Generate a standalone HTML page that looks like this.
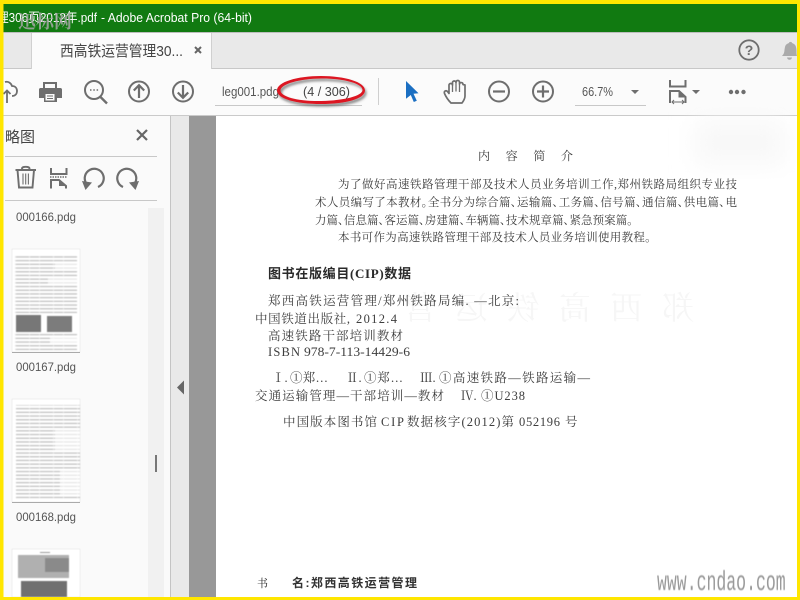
<!DOCTYPE html>
<html lang="zh"><head><meta charset="utf-8"><title>Acrobat</title>
<style>
html,body{margin:0;padding:0;width:800px;height:600px;overflow:hidden;background:#fff}
svg{display:block}
.ui{font-family:"Liberation Sans","Noto Sans CJK SC",sans-serif;fill:#555}
.doc text{font-family:"Liberation Serif","Noto Serif CJK SC",serif;font-size:11.5px;fill:#3d3d3d;font-feature-settings:"palt"}
.doc .c{font-size:12.5px}
.ic{fill:none;stroke:#6e6e6e;stroke-width:2}
</style></head><body>
<svg width="800" height="600" viewBox="0 0 800 600" xmlns="http://www.w3.org/2000/svg">
<defs>
<filter id="b" x="-5%" y="-20%" width="110%" height="140%"><feGaussianBlur stdDeviation="0.3"/></filter>
<filter id="b2" x="-20%" y="-20%" width="140%" height="140%"><feGaussianBlur stdDeviation="0.35"/></filter>
<filter id="b3" x="-30%" y="-30%" width="160%" height="160%"><feGaussianBlur stdDeviation="12"/></filter>
<filter id="bt" x="-5%" y="-5%" width="110%" height="110%"><feGaussianBlur stdDeviation="0.4"/></filter>
<filter id="sh" x="-10%" y="-30%" width="120%" height="170%"><feDropShadow dx="1.500" dy="2.500" stdDeviation="1.300" flood-color="#444" flood-opacity=".65"/></filter>
<pattern id="tl" width="24" height="3.7" patternUnits="userSpaceOnUse"><rect y="1.200" width="24" height=".9" fill="#a8a8a8"/><rect x="5" y="1.200" width="1" height=".9" fill="#e2e2e2"/><rect x="15" y="1.200" width="1" height=".9" fill="#e2e2e2"/></pattern>
</defs>

<!-- base -->
<rect width="800" height="600" fill="#fff"/>
<rect x="0" y="4" width="800" height="28" fill="#117a11"/>
<rect y="32" width="800" height="1" fill="#bdbdbd"/>
<rect y="33" width="800" height="35" fill="#e9e9e9"/>
<rect y="68" width="800" height="1" fill="#c8c8c8"/>
<rect y="69" width="800" height="46" fill="#fbfbfb"/>
<rect y="115" width="800" height="1" fill="#cacaca"/>
<rect x="0" y="116" width="170" height="484" fill="#fafafa"/>
<rect x="170" y="116" width="1" height="484" fill="#c4c4c4"/>
<rect x="171" y="116" width="18" height="484" fill="#e9e9e9"/>
<rect x="189" y="116" width="27" height="484" fill="#989898"/>
<rect x="216" y="116" width="584" height="484" fill="#fff"/>

<!-- title -->
<text x="-3" y="22" class="ui" style="font-size:13px;fill:#fff" textLength="100" lengthAdjust="spacingAndGlyphs">理306页2012年.pdf</text>
<text x="101" y="22" class="ui" style="font-size:13px;fill:#fff" textLength="151" lengthAdjust="spacingAndGlyphs">- Adobe Acrobat Pro (64-bit)</text>
<text x="18" y="28" style="font-family:'Noto Serif CJK SC',serif;font-size:18px;font-weight:bold;fill:#a8a8a8;opacity:.85" textLength="54">迅标网</text>

<!-- tab -->
<rect x="32" y="33" width="179" height="36" fill="#fbfbfb"/>
<path d="M31.500 33V69M211.500 33V69" stroke="#d0d0d0" fill="none"/>
<text x="60" y="56" class="ui" style="font-size:15px;fill:#444" textLength="123" lengthAdjust="spacingAndGlyphs">西高铁运营管理30...</text>
<path d="M195 47l6 6M201 47l-6 6" stroke="#666" stroke-width="2" fill="none"/>

<!-- help, bell -->
<circle cx="749" cy="50" r="9.700" fill="none" stroke="#6e6e6e" stroke-width="1.800"/>
<text x="749" y="55" text-anchor="middle" class="ui" style="font-size:14px;font-weight:bold;fill:#6e6e6e">?</text>
<path d="M782 56c3-3 2-5 3-9 .5-2.500 2.500-3.500 4-4 0-1.500 3-1.500 3 0 1.500.5 3.500 1.500 4 4 1 4 0 6 1 9zM787 57.500c.5 3 4.500 3 5 0z" fill="#aaa"/>

<!-- toolbar left -->
<g class="ic">
<path d="M5 82c3-1 6 1 7 4 3 0 5 2 5 5s-2 5-5 5" stroke-width="1.800"/>
<path d="M7 103V91M3.500 94L7 90.500 10.500 94" stroke-width="1.800"/>
<circle cx="94" cy="90" r="9"/>
<path d="M100.500 97l6.500 6.500" stroke-width="2.400"/>
<circle cx="139" cy="91.500" r="10"/>
<path d="M139 98V85M133.800 90.500l5.200-5.300 5.200 5.300" stroke-width="2.200"/>
<circle cx="183" cy="91.500" r="10"/>
<path d="M183 85v13M177.800 92.500l5.200 5.300 5.200-5.300" stroke-width="2.200"/>
</g>
<path d="M43 82h14v6h3.500c.8 0 1.500.7 1.500 1.500V98h-5v4H44v-4h-5v-8.500c0-.8.7-1.500 1.500-1.500H43z" fill="#6e6e6e"/>
<rect x="45" y="84" width="10" height="4" fill="#fbfbfb"/>
<rect x="45.500" y="94" width="9" height="6.500" fill="#fbfbfb"/>
<path d="M47 96h6M47 98.500h6" stroke="#6e6e6e" fill="none"/>
<path d="M90 90h1.500M93.300 90h1.500M96.600 90h1.500" stroke="#6e6e6e" stroke-width="1.500" fill="none"/>

<!-- page field -->
<text x="222" y="96" class="ui" style="font-size:13px" textLength="57" lengthAdjust="spacingAndGlyphs">leg001.pdg</text>
<rect x="215" y="105" width="147" height="1" fill="#c8c8c8"/>
<rect x="378" y="78" width="1" height="27" fill="#cfcfcf"/>
<path d="M277 90.500C277 82 297 76 321 76s44 6 44 14.500S345 104 321 104 277 99 277 90.500zM280.500 90.500C280.500 97 299 101.500 321.500 101 344 100.500 362.500 96 362.500 90 362.500 83.500 344 78.500 322 78.500S280.500 84 280.500 90.500z" fill="#dc1420" fill-rule="evenodd" filter="url(#sh)"/>
<text x="303" y="96" class="ui" style="font-size:13px;fill:#444" textLength="47" lengthAdjust="spacingAndGlyphs">(4 / 306)</text>

<!-- toolbar right -->
<path d="M406 81l12.500 12.300-5 .4 3.300 7-3 1.300-3-7-4.800 3.800z" fill="#1b6fc2"/>
<path d="M451 103C448 100 446 97 444.500 93.500 443.700 91 446 90 447.500 91.500L449 93.500V85C449 83 452.500 83 452.500 85V82.500C452.500 80.500 456 80.500 456 82.500V82C456 80 459.500 80 459.500 82V84C459.500 82 463 82 463 84.500L465 85V96C465 99 463.500 101 462 103Z" fill="none" stroke="#6e6e6e" stroke-width="1.700" stroke-linejoin="round"/>
<path d="M452.500 85v7M456 82.500v9M459.500 84v8" stroke="#6e6e6e" stroke-width="1.300" fill="none"/>
<g class="ic">
<circle cx="499" cy="91.500" r="10"/><path d="M493 91.500h12" stroke-width="2.200"/>
<circle cx="543" cy="91.500" r="10"/><path d="M537 91.500h12M543 85.500v12" stroke-width="2.200"/>
</g>
<text x="582" y="96" class="ui" style="font-size:13px" textLength="31" lengthAdjust="spacingAndGlyphs">66.7%</text>
<path d="M631 90h8l-4 4z" fill="#6e6e6e"/>
<rect x="575" y="105" width="71" height="1" fill="#c8c8c8"/>
<path d="M670 80v6.500h15.500V80" fill="none" stroke="#6e6e6e" stroke-width="2"/>
<path d="M670 103V91h9l6.500 6v6" fill="none" stroke="#6e6e6e" stroke-width="2"/>
<path d="M679 91v6h6.500" fill="#6e6e6e" stroke="#6e6e6e"/>
<path d="M672 102h12M674 100l-2 2 2 2M682 100l2 2-2 2" fill="none" stroke="#6e6e6e" stroke-width="1"/>
<path d="M692 90h8l-4 4z" fill="#6e6e6e"/>
<circle cx="731" cy="92" r="2.200" fill="#6e6e6e"/><circle cx="737" cy="92" r="2.200" fill="#6e6e6e"/><circle cx="743.500" cy="92" r="2.200" fill="#6e6e6e"/>

<!-- sidebar -->
<text x="5" y="142" class="ui" style="font-size:15px;fill:#444" textLength="30">略图</text>
<path d="M137 130l10 10M147 130l-10 10" stroke="#666" stroke-width="2.200" fill="none"/>
<rect x="5" y="156" width="152" height="1" fill="#c8c8c8"/>
<rect x="5" y="200" width="152" height="1" fill="#c8c8c8"/>
<g fill="none" stroke="#6e6e6e">
<path d="M15.500 170h20.500M22 170v-1.500c0-2.200 7.500-2.200 7.500 0V170M17.500 170l1.500 17.500h13.500l1.500-17.500" stroke-width="1.900"/>
<path d="M23 173.500v11M25.700 173.500v11M28.400 173.500v11" stroke-width="1.100"/>
<path d="M51 168v6h15.500v-6" stroke-width="2"/>
<path d="M50 177h17" stroke-width="1.600" stroke-dasharray="1.500 1"/>
<path d="M51 188.500V180h8l7 6v2.500" stroke-width="2"/>
<path d="M86 183A9.500 9.500 0 1 1 98 187" stroke-width="2.200"/>
<path d="M135 183A9.500 9.500 0 1 0 123 187" stroke-width="2.200"/>
</g>
<path d="M59 180l7 6h-7z" fill="#6e6e6e"/>
<path d="M82 181l10 1.500-6.500 7.500z" fill="#6e6e6e"/><path d="M139 181l-10 1.500 6.500 7.500z" fill="#6e6e6e"/>
<text x="16" y="221" class="ui" style="font-size:12px" textLength="60" lengthAdjust="spacingAndGlyphs">000166.pdg</text>
<text x="16" y="371" class="ui" style="font-size:12px" textLength="60" lengthAdjust="spacingAndGlyphs">000167.pdg</text>
<text x="16" y="521" class="ui" style="font-size:12px" textLength="60" lengthAdjust="spacingAndGlyphs">000168.pdg</text>

<!-- scrollbar -->
<rect x="148" y="208" width="16" height="389" fill="#f1f1f1"/>
<rect x="155" y="455" width="2" height="17" fill="#777"/>
<path d="M184 381.500v14l-7-7z" fill="#666" transform="translate(0 -1)"/>

<!-- thumbnails -->
<g>
<rect x="12" y="249" width="68" height="103" fill="#fff" stroke="#e0e0e0" stroke-width=".5"/>
<path d="M12 352.500h68" stroke="#aaa"/>
<g filter="url(#bt)">
<rect x="15" y="255" width="62" height="58" fill="url(#tl)"/>
<rect x="55" y="262" width="22" height="8" fill="#fff" opacity=".6"/>
<rect x="48" y="278" width="29" height="7" fill="#fff" opacity=".6"/>
<rect x="16" y="315" width="25" height="17" fill="#777"/>
<rect x="47" y="316" width="25" height="16" fill="#7c7c7c"/>
<rect x="15" y="333" width="62" height="17" fill="url(#tl)"/>
<rect x="50" y="336" width="27" height="7" fill="#fff" opacity=".7"/>
</g>

<rect x="12" y="399" width="68" height="103" fill="#fff" stroke="#e0e0e0" stroke-width=".5"/>
<path d="M12 502.500h68" stroke="#aaa"/>
<g filter="url(#bt)">
<rect x="16" y="405" width="64" height="94" fill="url(#tl)"/>
<rect x="55" y="430" width="25" height="22" fill="#fff" opacity=".6"/>
<rect x="60" y="470" width="20" height="26" fill="#fff" opacity=".6"/>
</g>

<rect x="12" y="549" width="68" height="48" fill="#fff" stroke="#e0e0e0" stroke-width=".5"/>
<g filter="url(#bt)">
<rect x="18" y="555" width="51" height="23" fill="#b0b0b0"/>
<rect x="45" y="558" width="24" height="14" fill="#8a8a8a"/>
<rect x="21" y="581" width="46" height="16" fill="#6f6f6f"/>
<rect x="40" y="552" width="10" height="1" fill="#999"/>
</g>
</g>

<!-- faint scan artefacts -->
<rect x="695" y="120" width="90" height="45" fill="#f8f8f8" filter="url(#b3)"/>
<text transform="translate(694 319) scale(-1 1)" style="font-family:'Noto Serif CJK SC',serif;fill:#f6f6f6;font-size:32px" textLength="290">郑西高铁运营</text>

<!-- document text -->
<g class="doc" filter="url(#b)">
<text x="478" y="160" textLength="95" style="font-size:12px">内 容 简 介</text>
<text x="338" y="188" textLength="399">为了做好高速铁路管理干部及技术人员业务培训工作,郑州铁路局组织专业技</text>
<text x="315" y="206" textLength="422">术人员编写了本教材。全书分为综合篇、运输篇、工务篇、信号篇、通信篇、供电篇、电</text>
<text x="315" y="224" textLength="318">力篇、信息篇、客运篇、房建篇、车辆篇、技术规章篇、紧急预案篇。</text>
<text x="338" y="241" textLength="313">本书可作为高速铁路管理干部及技术人员业务培训使用教程。</text>
<text x="268" y="278" textLength="143" style="font-size:13px;font-weight:bold;font-family:'Liberation Serif','Noto Sans CJK SC',sans-serif;fill:#2a2a2a">图书在版编目(CIP)数据</text>
<text class="c" x="268" y="305" textLength="251">郑西高铁运营管理/郑州铁路局编. —北京:</text>
<text class="c" x="255" y="323" textLength="95">中国铁道出版社,</text>
<text class="c" x="356" y="323" textLength="41">2012.4</text>
<text class="c" x="268" y="340" textLength="135">高速铁路干部培训教材</text>
<text class="c" x="268" y="356" textLength="32">ISBN</text>
<text class="c" x="304" y="356" textLength="106" lengthAdjust="spacingAndGlyphs">978-7-113-14429-6</text>
<text class="c" x="272" y="382">Ⅰ.</text><text class="c" x="290" y="382" textLength="38">①郑…</text>
<text class="c" x="346" y="382">Ⅱ.</text><text class="c" x="364" y="382" textLength="39">①郑…</text>
<text class="c" x="420" y="382">Ⅲ.</text><text class="c" x="439" y="382" textLength="151">①高速铁路—铁路运输—</text>
<text class="c" x="255" y="400" textLength="189">交通运输管理—干部培训—教材</text>
<text class="c" x="461" y="400">Ⅳ.</text><text class="c" x="481" y="400" textLength="44">①U238</text>
<text class="c" x="283" y="426" textLength="94">中国版本图书馆</text>
<text class="c" x="381" y="426" textLength="23">CIP</text>
<text class="c" x="407" y="426" textLength="107">数据核字(2012)第</text>
<text class="c" x="519" y="426" textLength="41">052196</text>
<text class="c" x="565" y="426">号</text>
<text x="257" y="587" style="font-size:11px;fill:#333">书</text>
<text x="292" y="587" textLength="125" style="font-size:12px;font-weight:bold;font-family:'Liberation Sans','Noto Sans CJK SC',sans-serif;fill:#333">名:郑西高铁运营管理</text>
</g>
<text transform="translate(657 590) scale(1 1.700)" filter="url(#b2)" style="font-family:'Liberation Mono',monospace;font-size:16.500px;fill:#999">www.cndao.com</text>

<!-- yellow frame -->
<path d="M0 0H800V600H0zM3.500 4V597H797V4z" fill-rule="evenodd" fill="#ffe600"/>
</svg>
</body></html>
